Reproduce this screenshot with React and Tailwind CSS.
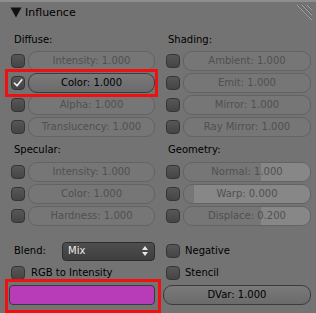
import React from 'react';

const font = { fontFamily: '"DejaVu Sans", "Liberation Sans", sans-serif' };

const Check = ({ checked }) => (
  <div className="w-[14px] h-[14px] shrink-0 rounded-[4px] border border-[#353535] bg-gradient-to-b from-[#575757] to-[#454545] flex items-center justify-center">
    {checked && (
      <svg width="10" height="10" viewBox="0 0 10 10">
        <path d="M1.5 5.2 L4 7.8 L8.8 1.8" fill="none" stroke="#f2f2f2" strokeWidth="1.6" strokeLinecap="round" strokeLinejoin="round" />
      </svg>
    )}
  </div>
);

const Field = ({ label, active, fill }) => (
  <div
    className={`relative flex-1 h-[20px] rounded-[9px] border overflow-hidden flex items-center justify-center text-[10px] leading-[12px] ${
      active
        ? 'border-[#3c3c3c] bg-gradient-to-b from-[#7a7a7a] to-[#6a6a6a] text-black'
        : 'border-[#636363] bg-[#767676] text-[#505050]'
    }`}
  >
    {fill === 'normal' && <div className="absolute right-0 top-0 bottom-0 w-[49px] bg-[#878787]" />}
    {fill === 'warp' && <div className="absolute right-0 top-0 bottom-0 left-[10px] bg-[#878787]" />}
    {fill === 'displace' && <div className="absolute right-0 top-0 bottom-0 w-[49px] bg-[#878787]" />}
    <span className="relative">{label}</span>
  </div>
);

const Row = ({ label, active, checked, fill, indent = 'ml-[2px]' }) => (
  <div className="h-[22px] flex items-center">
    <div className={indent}>
      <Check checked={checked} />
    </div>
    <div className="flex-1 flex ml-[3px]">
      <Field label={label} active={active} fill={fill} />
    </div>
  </div>
);

const Label = ({ text, h }) => (
  <div className={`${h} flex items-center pl-[5px] text-[10px] leading-[12px] text-black`}>{text}</div>
);

const App = () => {
  return (
    <div className="relative w-[316px] h-[313px] overflow-hidden bg-[#737373] border-t-2 border-[#8e8e8e]" style={font}>
      {/* header */}
      <div className="h-[27px] flex items-start pt-[4px] pl-[10px]">
        <svg width="12" height="11" viewBox="0 0 12 11" className="mt-[1px]">
          <path d="M0.5 0.5 H11.5 L6 10.5 Z" fill="#111" />
        </svg>
        <span className="ml-[3px] text-[11px] leading-[13px] text-black">Influence</span>
      </div>

      {/* grip */}
      <svg className="absolute top-[1px] right-[3px]" width="17" height="17" viewBox="0 0 17 17">
        <g strokeWidth="1">
          <path d="M1 2 L16 17" stroke="#a4a4a4" />
          <path d="M2 2 L16 16" stroke="#555" opacity="0.6" />
          <path d="M6 2 L16 12" stroke="#a4a4a4" />
          <path d="M7 2 L16 11" stroke="#555" opacity="0.6" />
          <path d="M11 2 L16 7" stroke="#a4a4a4" />
          <path d="M12 2 L16 6" stroke="#555" opacity="0.6" />
        </g>
      </svg>

      <div className="flex pl-[9px] gap-[8px]">
        {/* left column */}
        <div className="w-[146px] flex flex-col">
          <Label text="Diffuse:" h="h-[21px]" />
          <Row label="Intensity: 1.000" />
          <Row label="Color: 1.000" active checked />
          <Row label="Alpha: 1.000" />
          <Row label="Translucency: 1.000" />
          <Label text="Specular:" h="h-[23px]" />
          <Row label="Intensity: 1.000" />
          <Row label="Color: 1.000" />
          <Row label="Hardness: 1.000" />
          <div className="h-[13px]" />
          <div className="h-[22px] flex items-center">
            <span className="pl-[5px] w-[53px] text-[10px] leading-[12px] text-black">Blend:</span>
            <div className="flex-1 h-[19px] rounded-[4px] border border-[#2c2c2c] bg-gradient-to-b from-[#4e4e4e] to-[#3e3e3e] flex items-center justify-between pl-[5px] pr-[6px]">
              <span className="text-[10px] leading-[12px] text-[#ececec]">Mix</span>
              <svg width="6" height="12" viewBox="0 0 6 12">
                <path d="M0 5 L3 1 L6 5 Z" fill="#e6e6e6" />
                <path d="M0 7 L3 11 L6 7 Z" fill="#e6e6e6" />
              </svg>
            </div>
          </div>
          <div className="h-[22px] flex items-center">
            <div className="ml-[2px]">
              <Check />
            </div>
            <span className="ml-[6px] text-[10px] leading-[12px] text-black">RGB to Intensity</span>
          </div>
          <div className="h-[22px] flex items-center">
            <div className="w-full h-[20px] rounded-[4px] border border-[#3a3a3a] bg-[#b83cb8]" />
          </div>
        </div>

        {/* right column */}
        <div className="w-[148px] flex flex-col">
          <Label text="Shading:" h="h-[21px]" />
          <Row label="Ambient: 1.000" indent="ml-[3px]" />
          <Row label="Emit: 1.000" indent="ml-[3px]" />
          <Row label="Mirror: 1.000" indent="ml-[3px]" />
          <Row label="Ray Mirror: 1.000" indent="ml-[3px]" />
          <Label text="Geometry:" h="h-[23px]" />
          <Row label="Normal: 1.000" indent="ml-[3px]" fill="normal" />
          <Row label="Warp: 0.000" indent="ml-[3px]" fill="warp" />
          <Row label="Displace: 0.200" indent="ml-[3px]" fill="displace" />
          <div className="h-[13px]" />
          <div className="h-[22px] flex items-center">
            <div className="ml-[3px]">
              <Check />
            </div>
            <span className="ml-[5px] text-[10px] leading-[12px] text-black">Negative</span>
          </div>
          <div className="h-[22px] flex items-center">
            <div className="ml-[3px]">
              <Check />
            </div>
            <span className="ml-[5px] text-[10px] leading-[12px] text-black">Stencil</span>
          </div>
          <div className="h-[22px] flex items-center">
            <div className="w-full h-[20px] rounded-[9px] border border-[#3c3c3c] bg-gradient-to-b from-[#7a7a7a] to-[#6a6a6a] flex items-center justify-center text-[10px] leading-[12px] text-black">
              DVar: 1.000
            </div>
          </div>
        </div>
      </div>

      {/* annotation boxes */}
      <div className="absolute left-[5px] top-[67px] w-[153px] h-[28px] border-[3px] border-[#f01010]" />
      <div className="absolute left-[5px] top-[277px] w-[156px] h-[34px] border-[3px] border-[#f01010]" />
    </div>
  );
};

export default App;
